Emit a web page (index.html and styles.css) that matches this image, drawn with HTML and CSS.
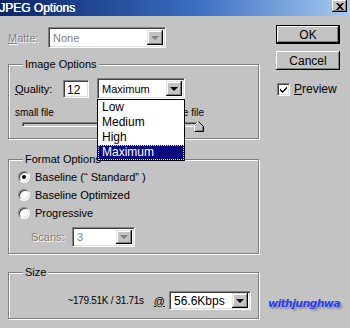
FILE: index.html
```html
<!DOCTYPE html>
<html lang="en">
<head>
    <meta charset="UTF-8">
    <title>JPEG Options</title>
    <link rel="stylesheet" href="styles.css">
</head>
<body>
    <div class="titlebar">
        <span class="title">JPEG Options</span>
        <span class="close">
            <svg width="8" height="7" viewBox="0 0 8 7"><path d="M0 0h2l2 2 2-2h2L5 3.5 8 7H6L4 5 2 7H0l3-3.5z" fill="#000"/></svg>
        </span>
    </div>

    <div class="dialog">
        <div class="main">
            <div class="matte-row">
                <span class="label disabled"><u>M</u>atte:</span>
                <div class="select sunken matte-select disabled">
                    <span>None</span>
                    <span class="arrow raised"><i class="tri grey"></i></span>
                </div>
            </div>

            <div class="group image-group">
                <span class="legend">Image Options</span>
                <div class="quality-row">
                    <span class="label quality-label"><u>Q</u>uality:</span>
                    <div class="field sunken">12</div>
                    <div class="combo">
                        <div class="select sunken quality-select">
                            <span>Maximum</span>
                            <span class="arrow raised"><i class="tri"></i></span>
                        </div>
                        <ul class="listbox">
                            <li>Low</li>
                            <li>Medium</li>
                            <li>High</li>
                            <li class="active">Maximum</li>
                        </ul>
                    </div>
                </div>
                <div class="slider-labels">
                    <span>small file</span>
                    <span>large file</span>
                </div>
                <div class="track">
                    <svg class="thumb" width="10" height="11" viewBox="0 0 10 11">
                        <path d="M0.5 10V4.5L4.5 0.5L9.5 5.5V10.5H0.5Z" fill="#c3c3c3"/>
                        <path d="M0.5 10.5V4.5L4.5 0.5" fill="none" stroke="#fff"/>
                        <path d="M4.5 0.5L9.5 5.5V10.5H0.5" fill="none" stroke="#000"/>
                        <path d="M8.5 5.5V9.5H1.5" fill="none" stroke="#808080"/>
                    </svg>
                </div>
            </div>

            <div class="group format-group">
                <span class="legend">Format Options</span>
                <div class="radio-row"><span class="radio checked"></span>Baseline (“ Standard” )</div>
                <div class="radio-row"><span class="radio"></span>Baseline Optimized</div>
                <div class="radio-row"><span class="radio"></span>Progressive</div>
                <div class="scans-row">
                    <span class="label disabled scans-label">Scans:</span>
                    <div class="select sunken scans-select disabled">
                        <span>3</span>
                        <span class="arrow raised"><i class="tri grey"></i></span>
                    </div>
                </div>
            </div>

            <div class="group size-group">
                <span class="legend">Size</span>
                <div class="size-row">
                    <span class="size-text">~179.51K / 31.71s</span>
                    <u class="at">@</u>
                    <div class="select sunken speed-select">
                        <span>56.6Kbps</span>
                        <span class="arrow raised"><i class="tri"></i></span>
                    </div>
                </div>
            </div>
        </div>

        <div class="side">
            <button class="btn default">OK</button>
            <button class="btn">Cancel</button>
            <div class="check-row">
                <span class="checkbox sunken">
                    <svg width="9" height="9" viewBox="0 0 9 9"><path d="M1 3.5l2.5 2.5L8 1.5v2L3.5 8 1 5.5z" fill="#000"/></svg>
                </span>
                <span><u>P</u>review</span>
            </div>
        </div>
    </div>

    <div class="watermark">withjunghwa</div>
</body>
</html>
```

FILE: styles.css
```css
body {
    margin: 0;
    width: 350px;
    height: 328px;
    overflow: hidden;
    position: relative;
    background: #c3c3c3;
    font-family: 'Liberation Sans', Arial, sans-serif;
    font-size: 11px;
    color: #000;
}

u {
    text-decoration: underline;
}

.titlebar {
    height: 16px;
    display: flex;
    justify-content: space-between;
    background: linear-gradient(to right, #0a246a, #3a6cc0 55%, #a6caf0);
    color: #fff;
}

.title {
    font-size: 12px;
    line-height: 16px;
    margin-left: -1px;
    text-shadow: 0.4px 0 0 #fff;
}

.close {
    width: 15px;
    height: 12px;
    margin-right: 3px;
    box-sizing: border-box;
    background: #c3c3c3;
    display: flex;
    align-items: center;
    justify-content: center;
    box-shadow: inset -1px -1px 0 #000, inset 1px 1px 0 #fff, inset -2px -2px 0 #808080;
}

.dialog {
    display: flex;
    padding: 10px 0 0 8px;
}

.main {
    width: 251px;
}

/* classic 3d edges */
.sunken {
    box-sizing: border-box;
    background: #fff;
    border: 1px solid;
    border-color: #808080 #fff #fff #808080;
    box-shadow: inset 1px 1px 0 #404040, inset -1px -1px 0 #dfdfdf;
}

.raised {
    box-sizing: border-box;
    background: #c3c3c3;
    box-shadow: inset -1px -1px 0 #000, inset 1px 1px 0 #dfdfdf, inset -2px -2px 0 #808080, inset 2px 2px 0 #fff;
}

.disabled {
    color: #808080;
    text-shadow: 1px 1px 0 #fff;
}

.select.disabled {
    text-shadow: none;
}

.select {
    display: flex;
    align-items: center;
    height: 21px;
    padding: 2px 2px 2px 4px;
}

.select .arrow {
    margin-left: auto;
    width: 16px;
    height: 100%;
    display: flex;
    align-items: center;
    justify-content: center;
}

.tri {
    width: 0;
    height: 0;
    border-left: 4px solid transparent;
    border-right: 4px solid transparent;
    border-top: 4px solid #000;
}

.tri.grey {
    border-top-color: #808080;
}

.matte-row {
    display: flex;
    align-items: center;
    margin-top: 1px;
}

.matte-row .label {
    width: 40px;
}

.matte-select {
    width: 118px;
}

.group {
    border: 1px solid #808080;
    box-shadow: 1px 1px 0 #fff, inset 1px 1px 0 #fff;
}

.legend {
    display: table;
    margin: -7px 0 0 14px;
    padding: 0 2px;
    line-height: 13px;
    background: #c3c3c3;
}

.image-group {
    margin-top: 16px;
    padding-bottom: 11px;
}

.quality-row {
    display: flex;
    align-items: center;
    margin: 7px 0 0 6px;
}

.quality-label {
    width: 48px;
}

.field {
    width: 26px;
    height: 18px;
    padding: 2px 3px;
    font-size: 12px;
}

.combo {
    position: relative;
    margin-left: 8px;
}

.quality-select {
    width: 88px;
}

.listbox {
    position: absolute;
    top: 100%;
    left: 0;
    z-index: 10;
    width: 88px;
    box-sizing: border-box;
    margin: 0;
    padding: 0;
    list-style: none;
    background: #fff;
    border: 1px solid #000;
    font-size: 12px;
}

.listbox li {
    height: 15px;
    line-height: 15px;
    padding-left: 4px;
}

.listbox li.active {
    background: #0a0a80;
    color: #fff;
    outline: 1px dotted #e8e8a0;
    outline-offset: -1px;
}

.slider-labels {
    display: flex;
    justify-content: space-between;
    width: 189px;
    margin: 8px 0 0 6px;
    font-size: 10px;
    line-height: 12px;
}

.track {
    position: relative;
    width: 178px;
    height: 5px;
    margin: 3px 0 0 13px;
    box-sizing: border-box;
    border: 1px solid;
    border-color: #808080 #fff #fff #808080;
    box-shadow: inset 1px 1px 0 #404040;
}

.thumb {
    position: absolute;
    left: 171px;
    top: -2px;
}

.format-group {
    margin-top: 20px;
    padding-bottom: 6px;
}

.radio-row {
    display: flex;
    align-items: center;
    height: 18px;
    padding-left: 9px;
}

.radio-row:first-of-type {
    margin-top: 2px;
}

.radio {
    width: 12px;
    height: 12px;
    box-sizing: border-box;
    margin-right: 5px;
    border-radius: 50%;
    background: #fff;
    border: 1px solid;
    border-color: #808080 #fff #fff #808080;
    box-shadow: inset 1px 1px 0 #404040, inset -1px -1px 0 #dfdfdf;
    display: flex;
    align-items: center;
    justify-content: center;
}

.radio.checked::after {
    content: "";
    width: 4px;
    height: 4px;
    border-radius: 50%;
    background: #000;
}

.scans-row {
    display: flex;
    align-items: center;
    margin: 5px 0 0 22px;
}

.scans-label {
    width: 41px;
}

.scans-select {
    width: 63px;
    height: 20px;
}

.size-group {
    margin-top: 18px;
    padding-bottom: 8px;
}

.size-row {
    display: flex;
    align-items: center;
    justify-content: flex-end;
    margin-top: 12px;
    padding-right: 7px;
}

.size-text {
    font-size: 10px;
    letter-spacing: -0.3px;
}

.at {
    margin: 0 4px 0 10px;
}

.speed-select {
    width: 82px;
    height: 19px;
    padding-top: 1px;
    padding-bottom: 1px;
    font-size: 12px;
}

.side {
    display: flex;
    flex-direction: column;
    margin-left: 17px;
}

.btn {
    width: 64px;
    height: 19px;
    padding: 0;
    margin: 0;
    border: none;
    background: #c3c3c3;
    font-family: inherit;
    font-size: 12px;
    color: #000;
    box-shadow: inset -1px -1px 0 #000, inset 1px 1px 0 #fff, inset -2px -2px 0 #808080;
}

.btn.default {
    margin-top: -1px;
    border: 1px solid #000;
}

.btn + .btn {
    margin-top: 7px;
}

.check-row {
    display: flex;
    align-items: center;
    margin-top: 12px;
    margin-left: 1px;
    font-size: 12px;
}

.checkbox {
    width: 13px;
    height: 13px;
    margin-right: 4px;
    display: flex;
    align-items: center;
    justify-content: center;
}

.watermark {
    position: absolute;
    left: 268px;
    top: 297px;
    font-family: 'DejaVu Sans', sans-serif;
    font-style: italic;
    font-weight: bold;
    font-size: 11px;
    letter-spacing: -0.7px;
    color: #2a3ce8;
    text-shadow: 0 0 1px #c8d0ff, 2px 2px 2px #8a8a8a;
}
```
